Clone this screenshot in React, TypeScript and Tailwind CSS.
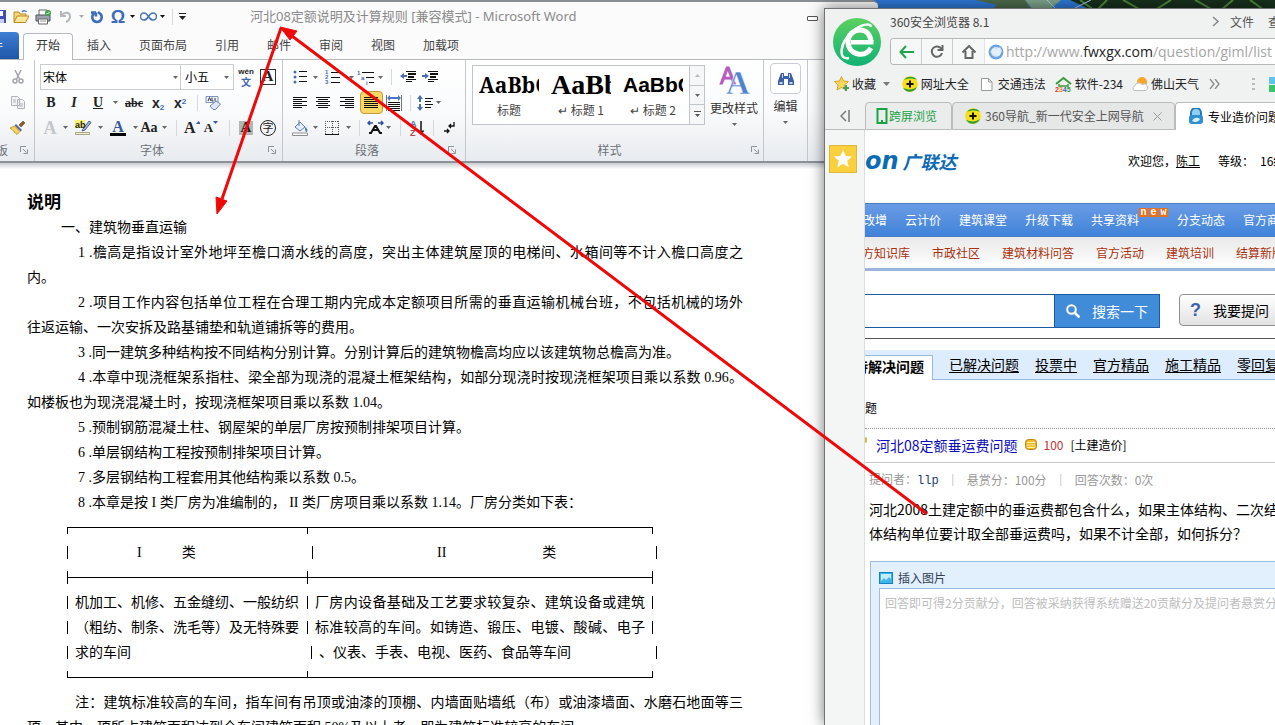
import React from "react";

const WORD_TABS = ["插入", "页面布局", "引用", "邮件", "审阅", "视图", "加载项"];

const NAV_ITEMS = [
  { label: "云计价", isNew: false },
  { label: "建筑课堂", isNew: false },
  { label: "升级下载", isNew: false },
  { label: "共享资料", isNew: true },
  { label: "分支动态", isNew: false },
  { label: "官方商城", isNew: false },
];

const SUB_NAV_ITEMS = ["市政社区", "建筑材料问答", "官方活动", "建筑培训", "结算新版"];

const QUESTION_TABS = ["已解决问题", "投票中", "官方精品", "施工精品", "零回复"];

interface DocLine {
  text: string;
  indent?: "heading" | "item" | "note";
  full?: boolean;
}

const DOC_LINES: DocLine[] = [
  { text: "一、建筑物垂直运输", indent: "heading" },
  { text: "1 .檐高是指设计室外地坪至檐口滴水线的高度，突出主体建筑屋顶的电梯间、水箱间等不计入檐口高度之", indent: "item", full: true },
  { text: "内。" },
  { text: "2 .项目工作内容包括单位工程在合理工期内完成本定额项目所需的垂直运输机械台班，不包括机械的场外", indent: "item", full: true },
  { text: "往返运输、一次安拆及路基铺垫和轨道铺拆等的费用。" },
  { text: "3 .同一建筑多种结构按不同结构分别计算。分别计算后的建筑物檐高均应以该建筑物总檐高为准。", indent: "item" },
  { text: "4 .本章中现浇框架系指柱、梁全部为现浇的混凝土框架结构，如部分现浇时按现浇框架项目乘以系数 0.96。", indent: "item", full: true },
  { text: "如楼板也为现浇混凝土时，按现浇框架项目乘以系数 1.04。" },
  { text: "5 .预制钢筋混凝土柱、钢屋架的单层厂房按预制排架项目计算。", indent: "item" },
  { text: "6 .单层钢结构工程按预制排架项目计算。", indent: "item" },
  { text: "7 .多层钢结构工程套用其他结构乘以系数 0.5。", indent: "item" },
  { text: "8 .本章是按 I 类厂房为准编制的， II 类厂房项目乘以系数 1.14。厂房分类如下表：", indent: "item" },
];

const NOTE_LINES: DocLine[] = [
  { text: "注：建筑标准较高的车间，指车间有吊顶或油漆的顶棚、内墙面贴墙纸（布）或油漆墙面、水磨石地面等三", indent: "note", full: true },
  { text: "项，其中一项所占建筑面积达到全车间建筑面积 50%及以上者，即为建筑标准较高的车间。" },
];

const INDENTS = {
  heading: "pl-[34px]",
  item: "pl-[51px]",
  note: "pl-12",
};

/* ---------- shared bits ---------- */

function Caret({ dark = false }: { dark?: boolean }) {
  return (
    <svg width="5" height="3" viewBox="0 0 5 3" className="shrink-0">
      <path d="M0 0h5L2.5 3z" fill={dark ? "#111" : "#666"} />
    </svg>
  );
}

function Slot({ w, label, children }: { w: string; label: string; children: React.ReactNode }) {
  return (
    <button type="button" aria-label={label} className={`flex h-full shrink-0 items-center justify-center ${w}`}>
      {children}
    </button>
  );
}

function Divider({ w }: { w: string }) {
  return (
    <span className={`flex h-full shrink-0 items-center justify-center ${w}`}>
      <span className="h-4 w-px bg-[#d5d8dd]" />
    </span>
  );
}

function RibbonGroup({ title, className, children }: { title: string; className: string; children: React.ReactNode }) {
  return (
    <section className={`flex shrink-0 flex-col border-r border-[#c3c7cd] pt-1 ${className}`}>
      <div className="h-[76px]">{children}</div>
      <div className="flex h-5 items-center text-[#6b7178]">
        <span className="flex-1 text-center">{title}</span>
        <button type="button" aria-label={`${title}设置`} className="flex w-4 justify-center">
          <svg width="8" height="8" viewBox="0 0 8 8" fill="none" stroke="#8d939b">
            <path d="M.5 6V.5H6M3 3l3.5 3.5M7.5 3.5v4h-4" />
          </svg>
        </button>
      </div>
    </section>
  );
}

function Lines({ rows }: { rows: [number, number][] }) {
  return (
    <svg width="16" height="14" viewBox="0 0 16 14">
      {rows.map(([x, w], i) => (
        <rect key={i} x={x} y={1 + i * 2} width={w} height="1" fill="#111" />
      ))}
    </svg>
  );
}

/* ---------- Word ---------- */

function QuickAccess() {
  return (
    <div className="flex h-6 items-center">
      <Slot w="w-2" label="保存">
        <svg width="8" height="16" viewBox="0 0 8 16">
          <path d="M0 1h6v13H0z" fill="#3f51b5" />
          <path d="M0 2h3v5H0z" fill="#fff" />
          <path d="M0 10h4v4H0z" fill="#c9cff0" />
        </svg>
      </Slot>
      <Slot w="w-[26px]" label="打开">
        <svg width="16" height="15" viewBox="0 0 16 15">
          <path d="M1 13V3h5l1 2h6v2" fill="#f7d774" stroke="#b98a2b" />
          <path d="M1 13.5L4 7h12l-3.500 6.500z" fill="#ffe79a" stroke="#b98a2b" />
          <path d="M9 3c2-2 4-1 4.500 0" fill="none" stroke="#4a7ac8" strokeWidth="1.500" />
        </svg>
      </Slot>
      <Slot w="w-[18px]" label="快速打印">
        <svg width="17" height="16" viewBox="0 0 17 16">
          <path d="M4 1h8v6H4z" fill="#fff" stroke="#666" />
          <path d="M1 6h14v6H1z" fill="#9ca3ad" stroke="#4b5563" />
          <path d="M3.500 10h9v5h-9z" fill="#fff" stroke="#666" />
          <path d="M5 12h6" stroke="#999" />
          <circle cx="13" cy="4" r="3" fill="#3fa34d" />
          <path d="M11.500 4l1 1 2-2" stroke="#fff" fill="none" />
        </svg>
      </Slot>
      <Slot w="w-[26px]" label="撤消">
        <svg width="13" height="13" viewBox="0 0 13 13" fill="none" stroke="#b4b8bd" strokeWidth="2">
          <path d="M2 1v5h5M2.500 5.500C6 1 11 2.500 11 6.500c0 3-2 4.500-4 5.500" />
        </svg>
      </Slot>
      <Slot w="w-1.5" label="撤消列表">
        <svg width="5" height="3"><path d="M0 0h5L2.500 3z" fill="#aaa" /></svg>
      </Slot>
      <Slot w="w-[26px]" label="重复">
        <svg width="14" height="14" viewBox="0 0 14 14" fill="none" stroke="#3d6cb9" strokeWidth="2.500">
          <path d="M4 3.500C1 6 2 12 7 12s6-6 3-8.500M1 2.500h5M6 2.500v4M10 3.500L8 2" />
        </svg>
      </Slot>
      <Slot w="w-4" label="符号">
        <span className="font-['Liberation_Sans','Noto_Sans_CJK_SC',sans-serif] text-lg font-bold text-[#3d6cb9]">Ω</span>
      </Slot>
      <Slot w="w-3" label="符号列表"><Caret dark /></Slot>
      <Slot w="w-5" label="无穷">
        <svg width="17" height="9" viewBox="0 0 17 9" fill="none" stroke="#4a74b4" strokeWidth="1.500">
          <path d="M8.500 4.500C7 2 5.500 1 4 1a3.500 3.500 0 0 0 0 7c1.500 0 3-1 4.500-3.500S11.500 1 13 1a3.500 3.500 0 0 1 0 7c-1.500 0-3-1-4.500-3.500z" />
        </svg>
      </Slot>
      <Slot w="w-2" label="无穷列表"><Caret dark /></Slot>
      <Divider w="w-3" />
      <Slot w="w-2" label="自定义快速访问工具栏">
        <svg width="7" height="7" viewBox="0 0 7 7"><path d="M0 0h7v1H0zM0 3h7L3.500 7z" fill="#222" /></svg>
      </Slot>
    </div>
  );
}

function FontGroup() {
  return (
    <RibbonGroup title="字体" className="pl-[5px] pr-0.5">
      <div className="flex h-[26px] items-center">
        <label className="flex h-[26px] w-[141px] items-center justify-between border border-[#c9ccd1] bg-white px-0.5">
          <select aria-label="字体" className="flex-1 appearance-none text-black outline-none" defaultValue="宋体">
            <option>宋体</option>
          </select>
          <Caret />
        </label>
        <label className="-ml-px flex h-[26px] w-[54px] items-center justify-between border border-[#c9ccd1] bg-white px-1">
          <select aria-label="字号" className="w-9 appearance-none text-black outline-none" defaultValue="小五">
            <option>小五</option>
          </select>
          <Caret />
        </label>
        <Slot w="w-6" label="拼音指南">
          <span className="flex flex-col items-center">
            <span className="font-['Liberation_Sans',sans-serif] text-[8px] leading-[9px] font-bold text-[#222]">wén</span>
            <span className="text-[10px] leading-[11px] font-bold text-[#4466b0]">文</span>
          </span>
        </Slot>
        <Slot w="w-5" label="字符边框">
          <span className="flex size-4 items-center justify-center border border-[#333] font-['Liberation_Serif',serif] text-[15px] font-bold text-[#222]">A</span>
        </Slot>
      </div>
      <div className="flex h-[25px] items-center font-['Liberation_Serif',serif] text-sm font-bold text-[#222]">
        <Slot w="w-[22px]" label="加粗">B</Slot>
        <Slot w="w-6" label="倾斜"><i>I</i></Slot>
        <Slot w="w-6" label="下划线"><span className="underline">U</span></Slot>
        <Slot w="w-2.5" label="下划线列表"><Caret /></Slot>
        <Slot w="w-7" label="删除线"><span className="text-xs line-through">abc</span></Slot>
        <Slot w="w-5" label="下标">
          <span className="font-['Liberation_Sans',sans-serif]">x<sub className="text-[8px] text-[#3d6cb9]">2</sub></span>
        </Slot>
        <Slot w="w-6" label="上标">
          <span className="font-['Liberation_Sans',sans-serif]">x<sup className="text-[8px] text-[#3d6cb9]">2</sup></span>
        </Slot>
        <Divider w="w-2.5" />
        <Slot w="w-[22px]" label="清除格式">
          <svg width="17" height="16" viewBox="0 0 17 16" fill="none">
            <path d="M1 1.500h12v6H1z" fill="#eef3fb" stroke="#7f93b8" />
            <path d="M3 6l1.500-3.500L6 6M7 2.500V6h1.500M10 3v3" stroke="#334" />
            <path d="M5 11l6-5 4.500 3-5 5.500H8z" fill="#dfe8f7" stroke="#6d86b5" />
          </svg>
        </Slot>
      </div>
      <div className="flex h-[25px] items-center font-['Liberation_Serif',serif] font-bold text-[#222]">
        <Slot w="w-5" label="文本效果"><span className="text-lg text-[#c4c6ca]">A</span></Slot>
        <Slot w="w-2.5" label="文本效果列表"><Caret /></Slot>
        <Slot w="w-[26px]" label="突出显示">
          <svg width="18" height="17" viewBox="0 0 18 17">
            <path d="M1 1h10v8H1z" fill="#fff26b" />
            <path d="M9 10l6-8 2 1.500L11 11l-3 1z" fill="#9fb3d6" stroke="#50618a" />
            <path d="M1.500 13.500h14v2h-14z" fill="#f5efc6" stroke="#a8a68c" />
            <text x="1" y="9" fontSize="9" fontFamily="Liberation Sans" fill="#222">ab</text>
          </svg>
        </Slot>
        <Slot w="w-2" label="突出显示列表"><Caret /></Slot>
        <Slot w="w-7" label="字体颜色">
          <span className="flex flex-col items-center text-base leading-[13px] text-[#35599c]">
            A<span className="h-[3px] w-4 bg-black" />
          </span>
        </Slot>
        <Slot w="w-1.5" label="字体颜色列表"><Caret /></Slot>
        <Slot w="w-[22px]" label="更改大小写"><span className="text-sm">Aa</span></Slot>
        <Slot w="w-2" label="大小写列表"><Caret /></Slot>
        <Divider w="w-4" />
        <Slot w="w-4" label="增大字体">
          <span className="text-base">A</span>
          <svg width="5" height="14"><path d="M0 3h5L2.500 0z" fill="#35599c" /></svg>
        </Slot>
        <Slot w="w-[22px]" label="缩小字体">
          <span className="text-[13px]">A</span>
          <svg width="5" height="14"><path d="M0 0h5L2.500 3z" fill="#35599c" /></svg>
        </Slot>
        <Divider w="w-3.5" />
        <Slot w="w-5" label="字符底纹">
          <span className="flex h-3.5 w-3.5 items-center justify-center bg-[#b5b5b5] text-[15px]">A</span>
        </Slot>
        <Slot w="w-6" label="带圈字符">
          <span className="flex size-4 items-center justify-center rounded-full border border-[#222] font-['Noto_Sans_CJK_SC',sans-serif] text-[11px] font-normal">字</span>
        </Slot>
      </div>
    </RibbonGroup>
  );
}

function ParagraphGroup() {
  return (
    <RibbonGroup title="段落" className="pl-[7px] pr-[5px]">
      <div className="flex h-[26px] items-center">
        <Slot w="w-5" label="项目符号">
          <svg width="16" height="14" viewBox="0 0 16 14">
            {[2, 7, 12].map((y) => (
              <g key={y}>
                <circle cx="3" cy={y} r="1.500" fill="#4a6cb0" />
                <path d={`M7 ${y - 1}h8v1H7z`} fill="#111" />
              </g>
            ))}
          </svg>
        </Slot>
        <Slot w="w-2.5" label="项目符号列表"><Caret /></Slot>
        <Slot w="w-[26px]" label="编号">
          <svg width="16" height="15" viewBox="0 0 16 15">
            {[1, 2, 3].map((n) => (
              <g key={n}>
                <text x="0" y={n * 5 - 1} fontSize="6" fontWeight="bold" fontFamily="Liberation Sans" fill="#4a6cb0">{n}</text>
                <path d={`M6 ${n * 5 - 3}h9v1H6z`} fill="#111" />
              </g>
            ))}
          </svg>
        </Slot>
        <Slot w="w-2.5" label="编号列表"><Caret /></Slot>
        <Slot w="w-5" label="多级列表">
          <svg width="18" height="15" viewBox="0 0 18 15">
            <g fontSize="6" fontWeight="bold" fontFamily="Liberation Sans" fill="#4a6cb0">
              <text x="0" y="5">1</text>
              <text x="4" y="10">a</text>
              <text x="9" y="15">i</text>
            </g>
            <path d="M5 2h12v1H5zM9 7h8v1H9zM12 12h5v1h-5z" fill="#111" />
          </svg>
        </Slot>
        <Slot w="w-2" label="多级列表选项"><Caret /></Slot>
        <Divider w="w-3.5" />
        <Slot w="w-5" label="减少缩进量">
          <svg width="17" height="14" viewBox="0 0 17 14">
            <path d="M6 1h10v1H6zM8 3h8v2H8zM8 6h6v2H8zM6 9h10v1H6zM6 11h6v1H6z" fill="#111" />
            <path d="M0 6l4-3v2h3v2H4v2z" fill="#4a6cb0" />
          </svg>
        </Slot>
        <Slot w="w-6" label="增加缩进量">
          <svg width="17" height="14" viewBox="0 0 17 14">
            <path d="M6 1h10v1H6zM8 3h8v2H8zM8 6h6v2H8zM6 9h10v1H6zM6 11h6v1H6z" fill="#111" />
            <path d="M7 6L3 3v2H0v2h3v2z" fill="#4a6cb0" />
          </svg>
        </Slot>
      </div>
      <div className="flex h-[25px] items-center">
        <Slot w="w-5" label="左对齐"><Lines rows={[[1, 14], [1, 9], [1, 14], [1, 9], [1, 14], [1, 9]]} /></Slot>
        <Slot w="w-[26px]" label="居中"><Lines rows={[[1, 14], [3, 10], [1, 14], [3, 10], [1, 14], [3, 10]]} /></Slot>
        <Slot w="w-[22px]" label="右对齐"><Lines rows={[[1, 14], [6, 9], [1, 14], [6, 9], [1, 14], [6, 9]]} /></Slot>
        <Slot w="w-[26px]" label="两端对齐">
          <span className="flex size-[23px] items-center justify-center rounded-sm border border-[#c29b3a] bg-[#fbd766]">
            <Lines rows={[[1, 14], [1, 14], [1, 14], [1, 14], [1, 14], [1, 14]]} />
          </span>
        </Slot>
        <Slot w="w-5" label="分散对齐">
          <svg width="16" height="16" viewBox="0 0 16 16">
            <path d="M0 0h1v16H0zM15 0h1v16h-1z" fill="#777" />
            <path d="M1 3l3-3v2h8V0l3 3-3 3V4H4v2z" fill="#4a78c4" />
            <path d="M2 7h12v1H2zM2 9h12v1H2zM2 11h12v1H2zM2 13h12v1H2zM2 15h12v1H2z" fill="#111" />
          </svg>
        </Slot>
        <Divider w="w-3" />
        <Slot w="w-[18px]" label="行距">
          <svg width="16" height="16" viewBox="0 0 16 16">
            <path d="M3 0l3 4H4v3H2V4H0zM3 16l3-4H4V9H2v3H0z" fill="#4a6cb0" />
            <path d="M8 3h8v1H8zM8 6h6v1H8zM8 9h8v1H8zM8 12h6v1H8z" fill="#111" />
          </svg>
        </Slot>
        <Slot w="w-2" label="行距列表"><Caret /></Slot>
      </div>
      <div className="flex h-[25px] items-center">
        <Slot w="w-5" label="底纹">
          <svg width="17" height="16" viewBox="0 0 17 16">
            <path d="M3 7l5-5 5 5-5 4z" fill="#e6eefb" stroke="#5a7ab5" />
            <path d="M7 6V0" stroke="#5a7ab5" />
            <path d="M13 7c2 1 3 3 2 5-2 0-2-2-2-5z" fill="#4a78c4" />
            <path d="M.5 13h15v2.500H.5z" fill="#fff" stroke="#8d8d8d" />
          </svg>
        </Slot>
        <Slot w="w-2.5" label="底纹列表"><Caret /></Slot>
        <Slot w="w-6" label="边框">
          <svg width="14" height="14" viewBox="0 0 14 14" fill="none" stroke="#555">
            <path d="M.5 0v13M13.500 0v13M7.500 0v13M0 .5h14M0 6.500h14" strokeDasharray="1 1" />
            <path d="M0 13.500h14" stroke="#111" />
          </svg>
        </Slot>
        <Slot w="w-2" label="边框列表"><Caret /></Slot>
        <Divider w="w-3.5" />
        <Slot w="w-[18px]" label="中文版式">
          <svg width="17" height="15" viewBox="0 0 17 15" fill="none">
            <path d="M1 3h5M11 3h5M3 1L1 3l2 2M14 1l2 2-2 2" stroke="#2f4fa0" strokeWidth="1.500" />
            <path d="M2 13h2l4-7h1l4 7h2M5 10h7" stroke="#111" strokeWidth="2" />
          </svg>
        </Slot>
        <Slot w="w-2" label="中文版式列表"><Caret /></Slot>
        <Divider w="w-4" />
        <Slot w="w-[18px]" label="排序">
          <svg width="16" height="16" viewBox="0 0 16 16">
            <g fontSize="9" fontWeight="bold" fontFamily="Liberation Sans">
              <text x="1" y="7" fill="#4a6cb0">A</text>
              <text x="1" y="16" fill="#b04a4a">Z</text>
            </g>
            <path d="M12 1v12M9.500 10.500L12 14l2.500-3.500" fill="none" stroke="#111" strokeWidth="1.500" />
          </svg>
        </Slot>
        <Divider w="w-3.5" />
        <Slot w="w-5" label="显示编辑标记">
          <svg width="12" height="14" viewBox="0 0 12 14" fill="none" stroke="#111" strokeWidth="1.300">
            <path d="M10 1v4H5M7 3L5 5l2 2M0 10h5M3 8l2 2-2 2" />
          </svg>
        </Slot>
      </div>
    </RibbonGroup>
  );
}

function StyleGroup() {
  return (
    <RibbonGroup title="样式" className="pl-1.5">
      <div className="flex items-start pt-px">
        <div className="flex h-[60px] border border-[#c0c5cc] bg-white">
          {[
            { id: "title", sample: "AaBbC", label: "标题", font: "font-['Noto_Serif','Liberation_Serif',serif] text-[21px]" },
            { id: "h1", sample: "AaBb", label: "↵ 标题 1", font: "font-['Liberation_Serif',serif] text-[28px]" },
            { id: "h2", sample: "AaBbC", label: "↵ 标题 2", font: "font-['Liberation_Sans',sans-serif] text-[21px]" },
          ].map((s) => (
            <button key={s.id} type="button" className="flex w-[72px] flex-col items-center px-1.5 pt-[3px]">
              <span className={`h-8 w-full overflow-hidden text-left leading-8 font-bold whitespace-nowrap text-black ${s.font}`}>
                {s.sample}
              </span>
              <span className="text-xs leading-[18px] whitespace-nowrap text-[#444]">{s.label}</span>
            </button>
          ))}
          <div className="flex w-[15px] flex-col divide-y divide-[#c0c5cc] border-l border-[#c0c5cc] bg-[#f6f7f9]">
            <button type="button" aria-label="上一行" className="flex flex-1 items-center justify-center">
              <svg width="5" height="3"><path d="M0 3h5L2.500 0z" fill="#bbb" /></svg>
            </button>
            <button type="button" aria-label="下一行" className="flex flex-1 items-center justify-center"><Caret /></button>
            <button type="button" aria-label="其他" className="flex flex-1 items-center justify-center">
              <svg width="7" height="7" viewBox="0 0 7 7"><path d="M0 0h7v1H0zM1 3h5L3.500 6z" fill="#555" /></svg>
            </button>
          </div>
        </div>
        <button type="button" className="flex w-[58px] flex-col items-center text-[#333]">
          <svg width="31" height="31" viewBox="0 0 31 31">
            <text x="1" y="19" fontSize="23" fontFamily="Liberation Sans" fill="#b45ac0" stroke="#b45ac0">A</text>
            <text x="7" y="29" fontSize="33" fontFamily="Liberation Serif" fontWeight="bold" fill="#4f82cf" stroke="#fff" strokeWidth=".5">A</text>
          </svg>
          <span className="leading-6">更改样式</span>
          <span className="flex h-2 items-center"><Caret /></span>
        </button>
      </div>
    </RibbonGroup>
  );
}

function Ribbon() {
  return (
    <div className="flex h-[101px] bg-linear-to-b from-white via-[#fafbfc] to-[#e8ebef]">
      <section className="flex w-[35px] shrink-0 flex-col border-r border-[#c3c7cd] pt-1 pr-1.5">
        <div className="flex h-[26px] items-center justify-end">
          <Slot w="w-5" label="剪切">
            <svg width="12" height="14" viewBox="0 0 12 14" fill="none" stroke="#a2a6ac" strokeWidth="1.500">
              <path d="M3 0l4.500 9M9 0L4.500 9" />
              <circle cx="3" cy="11" r="2" />
              <circle cx="9" cy="11" r="2" />
            </svg>
          </Slot>
        </div>
        <div className="flex h-[25px] items-center justify-end">
          <Slot w="w-5" label="复制">
            <svg width="15" height="13" viewBox="0 0 15 13" fill="#f1f2f4" stroke="#b0b4ba">
              <path d="M.5.5h6l2 2v7h-8zM6.500 3.500h5l2 2v7h-7z" />
              <path d="M2 4h3M2 6h3M8 8h4M8 10h4" />
            </svg>
          </Slot>
        </div>
        <div className="flex h-[25px] items-center justify-end">
          <Slot w="w-5" label="格式刷">
            <svg width="16" height="15" viewBox="0 0 16 15">
              <path d="M9 5l4-4 2 2-4 4z" fill="#8b5a2b" stroke="#5a3a1a" strokeWidth=".5" />
              <path d="M6 4l6 6-1.500 1.500-6-6z" fill="#5668a8" />
              <path d="M4.500 6l5.500 5.500L7 14.500C5 13 3 10 0 8z" fill="#f6d35c" stroke="#b58b1f" strokeWidth=".8" />
            </svg>
          </Slot>
        </div>
        <div className="flex h-5 items-center justify-between text-[#6b7178]">
          <span className="flex w-2 justify-end overflow-hidden whitespace-nowrap">板</span>
          <svg width="8" height="8" viewBox="0 0 8 8" fill="none" stroke="#8d939b">
            <path d="M.5 6V.5H6M3 3l3.500 3.500M7.500 3.500v4h-4" />
          </svg>
        </div>
      </section>
      <FontGroup />
      <ParagraphGroup />
      <StyleGroup />
      <section className="flex w-11 shrink-0 flex-col items-center border-r border-[#c3c7cd] pt-[3px]">
        <button type="button" className="flex flex-col items-center text-[#333]">
          <span className="flex size-[31px] items-center justify-center rounded-sm border border-[#c9ced6] bg-white">
            <svg width="16" height="14" viewBox="0 0 16 14">
              <path d="M3 1h3v3h4V1h3l3 8v4h-6V7H6v6H0V9z" fill="#3d5fa5" />
              <path d="M1.500 10h3v2h-3zM11.500 10h3v2h-3zM4 2h1v4H4zM11 2h1v4h-1z" fill="#c8d8f2" />
            </svg>
          </span>
          <span className="leading-6">编辑</span>
          <span className="flex h-2 items-center"><Caret /></span>
        </button>
      </section>
    </div>
  );
}

function DocText({ line }: { line: DocLine }) {
  return (
    <p
      className={`h-[25px] leading-[25px] whitespace-nowrap ${line.indent ? INDENTS[line.indent] : ""} ${
        line.full ? "[text-align-last:justify]" : ""
      }`}
    >
      {line.text}
    </p>
  );
}

function Bar() {
  return <span className="h-[13px] w-px shrink-0 bg-black" />;
}

// horizontal rule of the factory table; the ticks hang down, cross, or stand up
function RuleRow({ kind }: { kind: "top" | "mid" | "bottom" }) {
  const tick = {
    top: "items-start pt-3",
    mid: "items-center",
    bottom: "items-end pb-3",
  }[kind];
  const size = kind === "mid" ? "h-[13px]" : "h-[7px]";
  const rule = { top: "items-start", mid: "items-center", bottom: "items-end" }[kind];
  return (
    <tr aria-hidden="true">
      {[0, 1].map((i) => (
        <td key={i} className="p-0">
          <div className={`flex h-[25px] ${tick}`}>
            <div className={`flex flex-1 border-l border-black ${size} ${rule} ${i === 1 ? "border-r" : ""}`}>
              <span className="h-px flex-1 bg-black" />
            </div>
          </div>
        </td>
      ))}
    </tr>
  );
}

function FactoryTable() {
  return (
    <table className="ml-10 w-[586px] table-fixed border-collapse leading-[25px] whitespace-nowrap">
      <colgroup>
        <col className="w-[240px]" />
        <col />
      </colgroup>
      <tbody>
        <RuleRow kind="top" />
        <tr>
          <th className="p-0 font-normal">
            <div className="flex h-[25px] items-center">
              <Bar />
              <span className="ml-[69px]">I</span>
              <span className="ml-10">类</span>
            </div>
          </th>
          <th className="p-0 font-normal">
            <div className="flex h-[25px] items-center pl-[5px]">
              <Bar />
              <span className="ml-[124px]">II</span>
              <span className="ml-24">类</span>
              <span className="ml-[100px] flex"><Bar /></span>
            </div>
          </th>
        </tr>
        <RuleRow kind="mid" />
        {[
          ["机加工、机修、五金缝纫、一般纺织", "厂房内设备基础及工艺要求较复杂、建筑设备或建筑"],
          ["（粗纺、制条、洗毛等）及无特殊要", "标准较高的车间。如铸造、锻压、电镀、酸碱、电子"],
        ].map(([a, b]) => (
          <tr key={a}>
            <td className="p-0">
              <div className="flex h-[25px] items-center gap-[7px] pr-2">
                <Bar />
                <span className="flex-1 [text-align-last:justify]">{a}</span>
              </div>
            </td>
            <td className="p-0">
              <div className="flex h-[25px] items-center gap-[7px]">
                <Bar />
                <span className="flex-1 [text-align-last:justify]">{b}</span>
                <Bar />
              </div>
            </td>
          </tr>
        ))}
        <tr>
          <td className="p-0">
            <div className="flex h-[25px] items-center gap-[7px]">
              <Bar />
              求的车间
            </div>
          </td>
          <td className="p-0">
            <div className="flex h-[25px] items-center gap-[7px] pl-1">
              <Bar />
              <span>、仪表、手表、电视、医药、食品等车间</span>
              <span className="ml-[78px] flex"><Bar /></span>
            </div>
          </td>
        </tr>
        <RuleRow kind="bottom" />
      </tbody>
    </table>
  );
}

function WordWindow() {
  return (
    <div className="absolute inset-y-0 left-0 flex w-[878px] flex-col overflow-hidden rounded-tr-md border-t-2 border-[#8b8f94] bg-white font-['Noto_Sans_CJK_SC',sans-serif] text-xs">
      <header className="shrink-0 bg-[#fbfbfc]">
        <div className="flex h-[31px] items-center pb-0.5">
          <QuickAccess />
          <h1 className="ml-16 flex-1 font-['Noto_Sans','Noto_Sans_CJK_SC',sans-serif] text-[13px] whitespace-nowrap text-[#8a8a8a]">
            河北08定额说明及计算规则 [兼容模式] - Microsoft Word
          </h1>
          <button type="button" aria-label="最小化" className="mr-[60px] mt-1 h-[5px] w-[11px] rounded-[1px] border border-[#555] bg-white" />
        </div>
        <div className="flex h-[27px] items-end border-b border-[#b6babf]">
          <button type="button" aria-label="文件" className="h-[27px] w-[19px] shrink-0 overflow-hidden rounded-tr-sm bg-linear-to-b from-[#3f7fd4] to-[#1f56a8] text-white">
            <span className="flex justify-end pr-4 whitespace-nowrap">文件</span>
          </button>
          <button type="button" className="-mb-px ml-1 h-[27px] rounded-t-sm border border-b-0 border-[#b6babf] bg-white px-3 pb-1 text-[#333]">
            开始
          </button>
          {WORD_TABS.map((tab) => (
            <button key={tab} type="button" className="h-[25px] shrink-0 px-3.5 pb-1 text-[#444]">
              {tab}
            </button>
          ))}
        </div>
      </header>
      <Ribbon />
      <div className="h-0.5 shrink-0 bg-[#8d9299]" />
      <main className="flex-1 overflow-hidden bg-white bg-linear-to-b from-[#c9ccd1] to-white bg-[length:100%_6px] bg-no-repeat pt-7 pl-[27px] text-black">
        <div className="w-[716px] font-['Liberation_Serif','Noto_Sans_CJK_SC',serif] text-sm">
          <h2 className="h-6 text-[17px] leading-6 font-bold">说明</h2>
          {DOC_LINES.map((line) => (
            <DocText key={line.text} line={line} />
          ))}
          <FactoryTable />
          {NOTE_LINES.map((line) => (
            <DocText key={line.text} line={line} />
          ))}
        </div>
      </main>
    </div>
  );
}

/* ---------- browser ---------- */

function NavBall() {
  return (
    <svg width="16" height="16" viewBox="0 0 16 16" className="shrink-0">
      <circle cx="8" cy="8" r="7.800" fill="#f5df1b" />
      <path d="M1 12A8 8 0 0 0 15 11C11 14 6 14 1 12zM15 4A8 8 0 0 0 2 4c4-2 9-2 13 0z" fill="#2f9e2c" />
      <path d="M8 4.500v7M4.500 8h7" stroke="#111" strokeWidth="2" />
    </svg>
  );
}

function BrowserChrome() {
  return (
    <header className="flex shrink-0 flex-col bg-[#f0f1f1] text-xs">
      <div className="flex h-[58px]">
        <svg width="50" height="50" viewBox="0 0 50 50" className="mt-2 ml-[7px] shrink-0">
          <defs>
            <linearGradient id="ball" x1="0" y1="0" x2="0" y2="1">
              <stop offset="0" stopColor="#5bd160" />
              <stop offset="1" stopColor="#10b276" />
            </linearGradient>
          </defs>
          <circle cx="25" cy="25" r="24" fill="url(#ball)" />
          <path
            d="M39 31c-3 5-8 7-13 6-6-1-10-6-10-12 0-7 5-12 12-12 6 0 10 4 11 11"
            fill="none"
            stroke="#fff"
            strokeWidth="5"
          />
          <path d="M19 23h22.500v4.500H19z" fill="#fff" />
          <path d="M17 41C6 44 7 26 21 14 29 7 38 6 39 10" fill="none" stroke="#fff" strokeWidth="2.500" />
        </svg>
        <div className="flex min-w-0 flex-1 flex-col pl-2">
          <div className="flex h-[29px] items-center pb-1 text-[#555]">
            <span className="flex-1 text-[#444]">360安全浏览器 8.1</span>
            <button type="button" aria-label="更多菜单" className="mr-2.5">
              <svg width="8" height="11" viewBox="0 0 8 11" fill="none" stroke="#888" strokeWidth="1.500"><path d="M1 1l5 4.500L1 10" /></svg>
            </button>
            <button type="button" className="mr-3.5 whitespace-nowrap">文件</button>
            <button type="button" className="w-[7px] overflow-hidden whitespace-nowrap">查看</button>
          </div>
          <div className="flex h-[27px] items-stretch overflow-hidden rounded-l-sm border border-r-0 border-[#b4b6b8] bg-white">
            <div className="flex divide-x divide-[#c9cbcc] border-r border-[#e2e3e3] bg-[#f6f7f7]">
              <button type="button" aria-label="后退" className="flex w-[31px] items-center justify-center">
                <svg width="15" height="14" viewBox="0 0 15 14" fill="none" stroke="#1fa54b" strokeWidth="2"><path d="M7 1L1.500 7 7 13M1.500 7H15" /></svg>
              </button>
              <button type="button" aria-label="刷新" className="flex w-[31px] items-center justify-center">
                <svg width="14" height="15" viewBox="0 0 14 15" fill="none" stroke="#666" strokeWidth="2"><path d="M11.500 5A5.200 5.200 0 1 0 12 9M12.500 1v5h-5" /></svg>
              </button>
              <button type="button" aria-label="主页" className="flex w-[31px] items-center justify-center">
                <svg width="14" height="14" viewBox="0 0 14 14" fill="none" stroke="#666" strokeWidth="2"><path d="M.5 7.500L7 1l6.500 6.500M3.500 6v7h7V6" /></svg>
              </button>
            </div>
            <div className="flex min-w-0 flex-1 items-center gap-0.5 pl-[3px]">
              <svg width="16" height="16" viewBox="0 0 16 16" className="shrink-0">
                <circle cx="8" cy="8" r="7.500" fill="#6ea5e0" />
                <circle cx="8" cy="8" r="5" fill="#cfe4f8" />
                <path d="M2 8l4-4 2 2 4-3 2 4-3 5-4-1z" fill="#e9f4fd" opacity=".8" />
              </svg>
              <span className="font-['Open_Sans','Noto_Sans_CJK_SC',sans-serif] text-sm whitespace-nowrap text-[#a5a5a5]">
                http://www.<span className="text-[#222]">fwxgx.com</span>/question/giml/list
              </span>
            </div>
          </div>
        </div>
      </div>

      <div className="flex h-[34px] items-center overflow-hidden whitespace-nowrap pl-[9px] text-[#222]">
        <button type="button" className="flex items-center gap-0.5">
          <svg width="16" height="16" viewBox="0 0 16 16">
            <path d="M7.500.5l2 4.500 5 .5-4 3.500 1.500 5-4.500-2.500L3 14l1-5L.5 5.500l5-.5z" fill="#fbd65c" stroke="#d8a325" />
            <path d="M12 9v6M9 12h6" stroke="#3aa35a" strokeWidth="2" />
          </svg>
          收藏
        </button>
        <button type="button" aria-label="收藏列表" className="flex w-7 justify-center">
          <svg width="7" height="4"><path d="M0 0h7L3.500 4z" fill="#777" /></svg>
        </button>
        <a href="#daquan" className="ml-1 flex items-center gap-[3px]"><NavBall />网址大全</a>
        <a href="#jiaotong" className="ml-3 flex items-center gap-[5px]">
          <svg width="12" height="13" viewBox="0 0 12 13" fill="#fff" stroke="#999"><path d="M.5.5h7l3.500 3.500v8.500H.5zM7.500.5V4H11" /></svg>
          交通违法
        </a>
        <a href="#soft" className="ml-[9px] flex items-center gap-[3px]">
          <svg width="17" height="16" viewBox="0 0 17 16">
            <path d="M1 8l7.500-6L16 8" fill="none" stroke="#3a9a3a" strokeWidth="2" />
            <path d="M4 8v2h9V8" fill="none" stroke="#3a9a3a" strokeWidth="1.500" />
            <text x="0" y="15.500" fontSize="7" fontWeight="bold" fontFamily="Liberation Sans">
              <tspan fill="#d33">2</tspan><tspan fill="#e80">3</tspan><tspan fill="#36c">4</tspan><tspan fill="#393">5</tspan>
            </text>
          </svg>
          软件-234
        </a>
        <a href="#weather" className="ml-[9px] flex items-center gap-[3px]">
          <svg width="16" height="16" viewBox="0 0 16 16">
            <circle cx="10" cy="6" r="5" fill="#f7a72b" />
            <path d="M2 14.500a3 3 0 0 1 1-5 4 4 0 0 1 7-1 3.500 3.500 0 0 1 4 6z" fill="#fff" stroke="#b9bec4" />
          </svg>
          佛山天气
        </a>
        <button type="button" aria-label="更多收藏" className="ml-2.5">
          <svg width="11" height="10" viewBox="0 0 11 10" fill="none" stroke="#888" strokeWidth="1.300"><path d="M1 0l4 5-4 5M6 0l4 5-4 5" /></svg>
        </button>
        <svg width="3" height="13" className="ml-8 shrink-0" fill="#bbb"><path d="M0 0h3v2H0zM0 5h3v2H0zM0 10h3v2H0z" /></svg>
        <svg width="6" height="15" className="ml-3.5 shrink-0"><path d="M0 0h6v7H0z" fill="#5ec3ee" /><path d="M0 8h6v7H0z" fill="#3cc46b" /></svg>
      </div>

      <div className="flex h-[29px] items-end overflow-hidden whitespace-nowrap text-[#555]">
        <div className="flex h-[28px] w-10 shrink-0 items-center justify-center border-b border-[#b9bbbc]">
          <svg width="10" height="12" viewBox="0 0 10 12" fill="none" stroke="#777" strokeWidth="1.500"><path d="M6 1L1 6l5 5M9 0v12" /></svg>
        </div>
        <a href="#cross" className="flex h-[28px] w-[87px] shrink-0 items-center justify-center gap-px rounded-t border border-[#b9bbbc] bg-[#ebecec] pr-1 text-[#19a345]">
          <svg width="12" height="16" viewBox="0 0 12 16" fill="none" stroke="#19a345" strokeWidth="2"><path d="M1.500 1h9v14h-9zM5 13h2" /></svg>
          跨屏浏览
        </a>
        <a href="#nav" className="flex h-[28px] w-[223px] shrink-0 items-center gap-1 rounded-t border border-[#b9bbbc] bg-[#e6e7e7] pr-3 pl-3">
          <NavBall />
          <span className="flex-1">360导航_新一代安全上网导航</span>
          <svg width="9" height="9" viewBox="0 0 9 9" stroke="#999"><path d="M.5.5l8 8M8.500.5l-8 8" /></svg>
        </a>
        <a href="#question" className="flex h-[28px] flex-1 items-center gap-1 rounded-tl border border-r-0 border-b-0 border-[#b9bbbc] bg-white pl-3 text-black">
          <svg width="16" height="17" viewBox="0 0 16 17" className="shrink-0">
            <path d="M3 8V5a5 5 0 0 1 10 0v3" fill="#8fd0f0" stroke="#2478b8" strokeWidth="2" />
            <rect x="1" y="7" width="14" height="9" rx="3" fill="#2f8fd0" />
            <path d="M4 13c2-4 6-4 8-2-1 3-5 4-8 2z" fill="#d5effc" />
          </svg>
          专业造价问题
        </a>
      </div>
    </header>
  );
}

function SitePage() {
  return (
    <div className="min-w-0 flex-1 overflow-hidden bg-white text-xs whitespace-nowrap text-black">
      <div className="flex h-[73px] items-center pb-3">
        <div className="flex flex-1 items-center gap-1 text-[#0b6bb5] italic">
          <span className="font-['DejaVu_Sans',sans-serif] text-2xl leading-6 font-black">on</span>
          <span className="text-lg leading-6 font-bold">广联达</span>
        </div>
        <span>欢迎您，<a href="#me" className="underline">陈工</a></span>
        <span className="ml-[18px]">等级：</span>
        <span className="ml-1.5 w-[15px] overflow-hidden">16级</span>
      </div>

      <nav className="flex h-[34px] items-center gap-[18px] border-y border-[#4b7cc4] bg-linear-to-b from-[#6a9be4] to-[#3f83d9] text-white">
        <a href="#gz" className="flex w-[22px] shrink-0 justify-end overflow-hidden">改增</a>
        {NAV_ITEMS.map((item) => (
          <a key={item.label} href="#nav" className={`shrink-0 ${item.isNew ? "relative mr-5" : ""}`}>
            {item.label}
            {item.isNew && (
              <span className="absolute -top-1 left-full flex gap-px font-['Liberation_Mono',monospace] text-[10px] leading-[9px] font-bold">
                {["n", "e", "w"].map((ch) => (
                  <span key={ch} className="w-[9px] bg-[#e8701c] text-center">{ch}</span>
                ))}
              </span>
            )}
          </a>
        ))}
      </nav>
      <nav className="flex h-[34px] items-center gap-[22px] border-b-[3px] border-[#9db5da] bg-linear-to-b from-[#e9e9e9] to-white text-[#a8320c]">
        <a href="#zsk" className="flex w-[45px] shrink-0 justify-end overflow-hidden">方知识库</a>
        {SUB_NAV_ITEMS.map((label) => (
          <a key={label} href="#sub" className="shrink-0">{label}</a>
        ))}
      </nav>

      <form className="mt-[23px] flex h-[34px] text-sm" onSubmit={(e) => e.preventDefault()}>
        <input aria-label="搜索" className="h-[34px] w-[189px] shrink-0 border border-x-0 border-[#1a5ba3] bg-white outline-none" />
        <button type="submit" className="flex h-[34px] w-[106px] shrink-0 items-center justify-center gap-3 border border-[#1a5ba3] bg-[#408cd8] text-white">
          <svg width="14" height="14" viewBox="0 0 14 14" fill="none" stroke="#fff" strokeWidth="2"><circle cx="5.500" cy="5.500" r="4.300" /><path d="M9 9l4.500 4.500" strokeWidth="2.500" /></svg>
          搜索一下
        </button>
        <button type="button" className="ml-[19px] flex h-8 shrink-0 items-center rounded border border-[#8f8f8f] bg-linear-to-b from-white to-[#e2e2e2] pr-3 pl-2.5">
          <span className="w-[23px] text-left font-['Liberation_Sans',sans-serif] text-lg font-bold text-[#3c62a8]">?</span>
          我要提问
        </button>
      </form>

      <div className="mt-2.5 border-t border-[#555] pt-[11px]">
        <div className="flex h-[30px] items-end border-b border-[#9ab8dc] bg-[#deedfd] text-sm">
          <span className="-mb-px flex h-[25px] w-[68px] shrink-0 items-center justify-end overflow-hidden border-t border-r border-[#9ab8dc] bg-white pr-2 pb-1 font-bold">
            待解决问题
          </span>
          <div className="flex h-[29px] shrink-0 items-center gap-4 pb-0.5 pl-4">
            {QUESTION_TABS.map((label) => (
              <a key={label} href="#list" className="underline underline-offset-2">{label}</a>
            ))}
          </div>
        </div>
      </div>

      <p className="border-b border-dotted border-[#999] pt-[19px] pb-[11px] leading-[18px]">题</p>

      <div className="flex h-[34px] items-center border-b border-[#c8c8c8] pb-0.5">
        <span className="mb-2.5 h-1.5 w-0.5 rounded-r bg-[#d9b437]" />
        <a href="#q" className="ml-[9px] text-sm text-[#0b0bc0]">河北08定额垂运费问题</a>
        <svg width="12" height="11" viewBox="0 0 12 11" className="mx-[7px]">
          <rect x=".5" y=".5" width="11" height="10" rx="3" fill="#f0b92e" stroke="#b98516" />
          <path d="M2 3.500h8M2 6h8M2 8.500h8" stroke="#fff0a8" />
        </svg>
        <span className="text-[#c23434]">100</span>
        <span className="ml-[7px]">[土建造价]</span>
      </div>

      <div className="flex h-[34px] items-center gap-2 pl-1 text-[#999]">
        <span>提问者：<a href="#user" className="font-['Liberation_Mono',monospace] text-[#1c3a78]">llp</a></span>
        <span>｜</span>
        <span>悬赏分：100分</span>
        <span>｜</span>
        <span>回答次数：0次</span>
      </div>

      <div className="pl-1 text-sm leading-6">
        <p>河北2008土建定额中的垂运费都包含什么，如果主体结构、二次结构</p>
        <p>体结构单位要计取全部垂运费吗，如果不计全部，如何拆分？</p>
      </div>

      <div className="mt-4 ml-[5px] border border-r-0 border-[#9fbde0] bg-[#e2effd] pl-2">
        <button type="button" className="flex h-[26px] items-center gap-[5px] pt-1.5 text-[#333f55]">
          <svg width="14" height="12" viewBox="0 0 14 12">
            <rect x=".5" y=".5" width="13" height="11" fill="#3db4ea" stroke="#1682bd" />
            <path d="M2 2h10v7H2z" fill="#c5ecfb" />
            <path d="M2 9l3-3 2 2 3-3 2 2v2z" fill="#4cb2e3" />
          </svg>
          插入图片
        </button>
        <textarea
          aria-label="回答"
          placeholder="回答即可得2分贡献分，回答被采纳获得系统赠送20贡献分及提问者悬赏分"
          className="block h-[160px] w-full resize-none overflow-hidden border border-r-0 border-[#9fbde0] bg-white px-[5px] pt-1.5 whitespace-nowrap outline-none placeholder:text-[#bdbdbd]"
        />
      </div>
    </div>
  );
}

function BrowserWindow() {
  return (
    <div className="absolute top-2 right-0 bottom-0 left-[824px] flex flex-col overflow-hidden border-t border-l border-[#6f7375] bg-white font-['Noto_Sans_CJK_SC',sans-serif] shadow-[0_0_14px_rgba(0,0,0,0.55)]">
      <BrowserChrome />
      <div className="flex min-h-0 flex-1">
        <aside className="w-10 shrink-0 border-r border-[#dcdede] bg-[#f4f5f5] pt-[15px] pl-1">
          <button type="button" aria-label="收藏夹" className="flex size-7 items-center justify-center border border-[#e0b93a] bg-[#fbd03f]">
            <svg width="20" height="20" viewBox="0 0 20 20"><path d="M10 1l2.700 6 6.300.6-4.800 4.200 1.500 6.400L10 14.800l-5.700 3.400 1.500-6.400L1 7.600 7.300 7z" fill="#fff" /></svg>
          </button>
        </aside>
        <SitePage />
      </div>
    </div>
  );
}

/* ---------- desktop ---------- */

function Wallpaper() {
  return (
    <svg width="420" height="10" viewBox="0 0 420 10" className="absolute top-0 right-0">
      <rect width="420" height="10" fill="#2f78d8" />
      <path d="M120 0h60l-8 6 14 4h-50l6-5z" fill="#4c6b4a" />
      <path d="M170 0h36l-12 10h-16z" fill="#7fa48c" />
      <path d="M215 0h205v10H236l-10-5z" fill="#17301c" />
      <path d="M225 0l14 10M252 0l-10 10M268 0l18 10M300 10l16-10M340 0l18 10M378 0l-12 10M395 0l14 10" stroke="#4e8a3c" strokeWidth="2" />
      <path d="M192 0l10 10M236 0l-20 10" stroke="#a9d3f5" />
    </svg>
  );
}

function Arrows() {
  return (
    <svg className="pointer-events-none absolute inset-0 h-full w-full" stroke="#f00808" fill="#f00808">
      <path d="M281 28L222 199M288 33L927 514" strokeWidth="3" fill="none" />
      <path d="M217 214l-1-17 11 4zM280 27l17 4-7 9z" strokeWidth="1" />
    </svg>
  );
}

export default function App() {
  return (
    <div className="relative h-screen overflow-hidden bg-[#2f78d8]">
      <Wallpaper />
      <WordWindow />
      <BrowserWindow />
      <Arrows />
    </div>
  );
}
